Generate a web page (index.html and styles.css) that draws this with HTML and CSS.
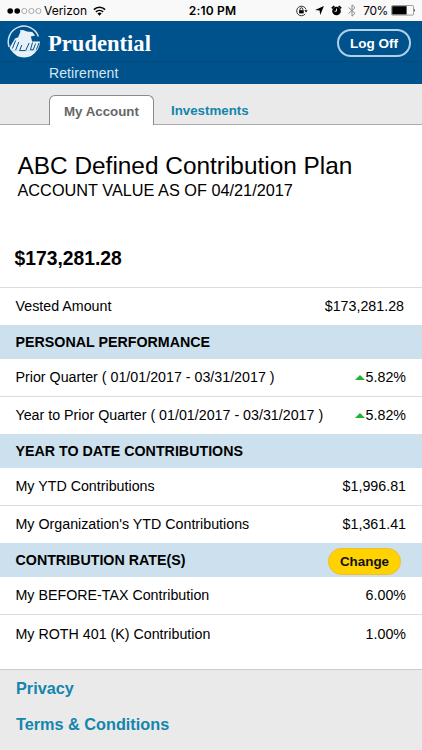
FILE: index.html
```html
<!DOCTYPE html>
<html lang="en">
<head>
    <meta charset="UTF-8">
    <meta name="viewport" content="width=device-width, initial-scale=1.0">
    <title>Prudential Retirement</title>
    <link rel="stylesheet" href="styles.css">
</head>
<body>

    <!-- Phone status bar -->
    <div class="status-bar">
        <div class="status-left">
            <svg class="signal" width="36" height="8" viewBox="0 0 36 8">
                <circle cx="3.2" cy="4" r="2.8"/>
                <circle cx="10.2" cy="4" r="2.8"/>
                <circle class="empty" cx="17.3" cy="4" r="2.6"/>
                <circle class="empty" cx="24.4" cy="4" r="2.6"/>
                <circle class="empty" cx="31.4" cy="4" r="2.6"/>
            </svg>
            <span class="carrier">Verizon</span>
            <svg class="wifi" width="13" height="10" viewBox="0 0 13 10">
                <path d="M.9 3.6a8 8 0 0 1 11.2 0M2.9 5.9a5.2 5.2 0 0 1 7.2 0" fill="none" stroke="#000" stroke-width="1.6"/>
                <path d="M6.5 9.7 4.4 7.5a3 3 0 0 1 4.2 0z"/>
            </svg>
        </div>
        <div class="clock">2:10 PM</div>
        <div class="status-right">
            <svg width="12" height="12" viewBox="0 0 12 12">
                <path d="M9.2 9A4.8 4.8 0 1 1 10 4.4" fill="none" stroke="#222" stroke-width=".9"/>
                <path d="M8.4 5.2h3.2L10 7.4z"/>
                <path d="M3.1 5.2h4.6v3.2H3.1z"/>
                <path d="M4 5.4V4.2a1.4 1.4 0 0 1 2.8 0v1.2" fill="none" stroke="#000" stroke-width=".8"/>
            </svg>
            <svg class="arrow" width="9" height="9" viewBox="0 0 9 9">
                <path d="M8.9.1 5.2 8.9 4.6 4.6.1 4.1z"/>
            </svg>
            <svg class="alarm" width="11" height="11" viewBox="0 0 11 11">
                <circle cx="5.5" cy="6" r="4.3"/>
                <path d="M.8 3.4 3.3 1M10.2 3.4 7.7 1" stroke="#000" stroke-width="1.7"/>
                <path d="M5.5 3.6v2.6h-2" fill="none" stroke="#fff" stroke-width=".9"/>
            </svg>
            <svg class="bluetooth" width="8" height="13" viewBox="0 0 8 13">
                <path d="M.6 3.5 7 9.3 4 12.2V.8l3 2.9L.6 9.5" fill="none" stroke="#888" stroke-width="1"/>
            </svg>
            <span class="percent">70%</span>
            <svg class="battery" width="25" height="11" viewBox="0 0 25 11">
                <rect x=".5" y=".5" width="22" height="9.6" rx="1" fill="none" stroke="#777" stroke-width=".7"/>
                <rect x="1.2" y="1.2" width="14.4" height="8.2"/>
                <path d="M23.3 3.6q1.5 1.7 0 3.4z"/>
            </svg>
        </div>
    </div>

    <!-- Header -->
    <div class="header">
        <div class="header-top">
            <svg class="logo" width="34" height="34" viewBox="0 0 34 34">
                <path class="ring" d="M2.2 22A15.3 15.3 0 0 1 31.4 11.4"/>
                <path class="rock" d="M2.6 22.8 8 13.4 11.2 12.2 13.4 6.8 12.8 5.2 16 5 20 6.6 25.3 7 28.2 10.6 23.8 11.4 25.2 16.4H33Q33 20.5 31 24L30 25.4H4z"/>
                <path class="rock" d="M4.2 25.2H30Q25.4 32.4 17.2 32.4 8.6 32.4 4.2 25.2z"/>
                <path class="crack" d="M8.6 15.5 5.4 23.5M11.8 17 8.6 25.2M14.8 20 12.6 25.6H18.4M22.2 18 18.6 25.6M25.5 17.5 23.4 24.8H26.2L28.6 18.5M32 18 29.4 24.6"/>
            </svg>
            <div class="brand">Prudential</div>
            <button class="log-off">Log Off</button>
        </div>
        <div class="header-sub">Retirement</div>
    </div>

    <div class="tabs">
        <div class="tab active">My Account</div>
        <div class="tab">Investments</div>
    </div>

    <!-- Plan summary -->
    <div class="summary">
        <h1>ABC Defined Contribution Plan</h1>
        <h2>ACCOUNT VALUE AS OF 04/21/2017</h2>
        <div class="balance">$173,281.28</div>
    </div>

    <div class="details">
        <div class="row vested">
            <span>Vested Amount</span>
            <span class="value">$173,281.28</span>
        </div>

        <div class="section">PERSONAL PERFORMANCE</div>
        <div class="row">
            <span>Prior Quarter ( 01/01/2017 - 03/31/2017 )</span>
            <span class="value"><i class="up"></i>5.82%</span>
        </div>
        <div class="row">
            <span>Year to Prior Quarter ( 01/01/2017 - 03/31/2017 )</span>
            <span class="value"><i class="up"></i>5.82%</span>
        </div>

        <div class="section">YEAR TO DATE CONTRIBUTIONS</div>
        <div class="row">
            <span>My YTD Contributions</span>
            <span class="value">$1,996.81</span>
        </div>
        <div class="row">
            <span>My Organization's YTD Contributions</span>
            <span class="value">$1,361.41</span>
        </div>

        <div class="section">
            <span>CONTRIBUTION RATE(S)</span>
            <button class="change">Change</button>
        </div>
        <div class="row">
            <span>My BEFORE-TAX Contribution</span>
            <span class="value">6.00%</span>
        </div>
        <div class="row last">
            <span>My ROTH 401 (K) Contribution</span>
            <span class="value">1.00%</span>
        </div>
    </div>

    <div class="footer">
        <a>Privacy</a>
        <a>Terms &amp; Conditions</a>
    </div>

</body>
</html>
```

FILE: styles.css
```css
* {
    box-sizing: border-box;
}

body {
    font-family: "Liberation Sans", Arial, sans-serif;
    background-color: #fff;
    color: #000;
    margin: 0;
    height: 750px;
    display: flex;
    flex-direction: column;
    overflow: hidden;
}

svg {
    display: block;
    flex: none;
}

button {
    font-family: inherit;
    font-weight: bold;
    padding: 0;
}

/* Status bar */
.status-bar {
    height: 21px;
    background-color: #f9f9f9;
    display: grid;
    grid-template-columns: 1fr auto 1fr;
    align-items: center;
    padding: 0 6px 0 7px;
    font-family: Inter, sans-serif;
    font-size: 12px;
}

.status-left, .status-right {
    display: flex;
    align-items: center;
}

.status-right {
    justify-content: flex-end;
}

.signal .empty {
    fill: none;
    stroke: #888;
    stroke-width: 0.7;
}

.carrier {
    margin-left: 1px;
}

.wifi {
    margin-left: 6px;
}

.clock {
    padding-left: 2px;
    font-weight: 600;
    letter-spacing: 0.2px;
}

.arrow {
    margin-left: 7px;
}

.alarm {
    margin-left: 7px;
}

.bluetooth {
    margin-left: 6px;
}

.percent {
    margin: 0 3px 0 7px;
    letter-spacing: -0.4px;
}

/* Header */
.header {
    height: 63px;
    background-color: #00528c;
    color: #fff;
}

.header-top {
    height: 41px;
    display: flex;
    align-items: flex-start;
    padding: 4px 11px 0 7px;
    border-bottom: 1px solid #064a7c;
}

.logo .ring {
    fill: none;
    stroke: #d5e5f1;
    stroke-width: 1.5;
}

.logo .rock {
    fill: #e8f1f8;
}

.logo .crack {
    fill: none;
    stroke: #00528c;
    stroke-width: 1;
}

.brand {
    flex: 1;
    margin: 6px 0 0 7px;
    font-family: "Liberation Serif", "Times New Roman", serif;
    font-weight: bold;
    font-size: 22.6px;
    line-height: 26px;
}

.log-off {
    width: 74px;
    height: 28px;
    margin-top: 4px;
    border: 2px solid #b3d0e8;
    border-radius: 14px;
    background-color: #00528c;
    color: #fff;
    font-size: 13.5px;
}

.header-sub {
    padding: 3px 0 0 49px;
    font-size: 14px;
    line-height: 16px;
    letter-spacing: 0.1px;
    color: #d5e5f1;
}

/* Tabs */
.tabs {
    height: 41px;
    display: flex;
    align-items: flex-end;
    padding-left: 49px;
    background-color: #eaeaea;
    border-bottom: 1px solid #aaa;
}

.tab {
    padding-left: 17px;
    font-size: 13.3px;
    font-weight: bold;
    line-height: 26px;
    color: #1485ab;
}

.tab.active {
    width: 105px;
    height: 30px;
    margin-bottom: -1px;
    padding-left: 14px;
    line-height: 31px;
    border: 1px solid #8a8a8a;
    border-bottom: 0;
    border-radius: 6px 6px 0 0;
    background-color: #fff;
    color: #666;
}

/* Plan summary */
.summary {
    height: 162px;
    padding: 26px 0 0 17.5px;
}

h1 {
    margin: 0;
    font-size: 24.4px;
    font-weight: normal;
    line-height: 30px;
}

h2 {
    margin: 0;
    font-size: 16.3px;
    font-weight: normal;
    line-height: 19px;
}

.balance {
    margin: 47px 0 0 -3px;
    font-size: 19.3px;
    font-weight: bold;
    line-height: 24px;
}

/* Detail rows */
.row {
    height: 38px;
    display: flex;
    justify-content: space-between;
    align-items: center;
    padding: 0 16px 1px 15.5px;
    border-top: 1px solid #dcdcdc;
    font-size: 14.25px;
}

.row.vested {
    padding-right: 18px;
}

.section + .row {
    height: 37px;
    border-top: 0;
}

.row.last {
    height: 55px;
    padding-bottom: 17px;
}

.value {
    display: flex;
    align-items: center;
}

.up {
    margin-right: 1px;
    border: 5px solid transparent;
    border-top: 0;
    border-bottom: 5px solid #1db52d;
}

.section {
    height: 34px;
    display: flex;
    justify-content: space-between;
    align-items: center;
    padding: 0 21px 1px 15.5px;
    background-color: #cce0ed;
    font-size: 14.25px;
    font-weight: bold;
}

.change {
    width: 73px;
    height: 27px;
    margin-top: 3px;
    border: 1px solid #f0bd2c;
    border-radius: 14px;
    background-color: #ffd200;
    color: #111;
    font-size: 13.4px;
}

/* Footer */
.footer {
    flex: 1;
    display: flex;
    flex-direction: column;
    gap: 16px;
    padding: 8px 16px;
    background-color: #eaeaea;
    border-top: 1px solid #ccc;
}

.footer a {
    font-size: 16.25px;
    font-weight: bold;
    line-height: 20px;
    color: #1485ab;
}
```
